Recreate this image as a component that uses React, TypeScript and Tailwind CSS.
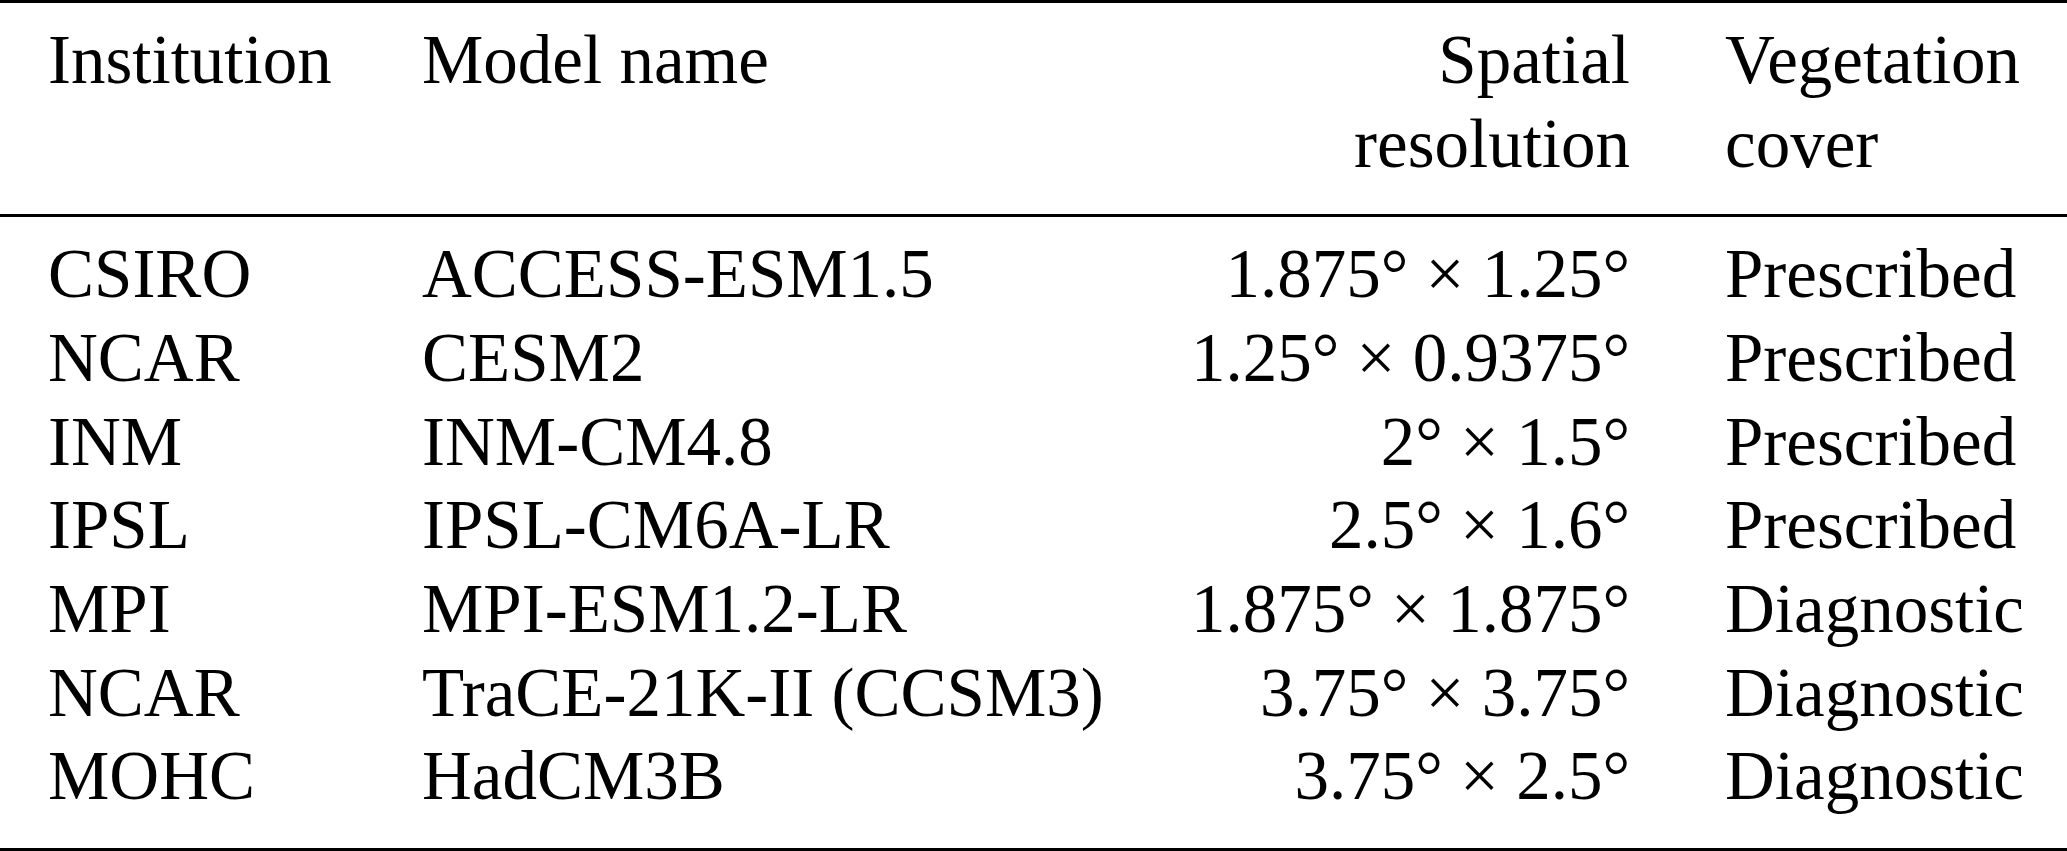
import React from 'react';

type Row = {
  institution: string;
  model: string;
  resolution: string;
  vegetation: string;
};

const rows: Row[] = [
  { institution: 'CSIRO', model: 'ACCESS-ESM1.5', resolution: '1.875° × 1.25°', vegetation: 'Prescribed' },
  { institution: 'NCAR', model: 'CESM2', resolution: '1.25° × 0.9375°', vegetation: 'Prescribed' },
  { institution: 'INM', model: 'INM-CM4.8', resolution: '2° × 1.5°', vegetation: 'Prescribed' },
  { institution: 'IPSL', model: 'IPSL-CM6A-LR', resolution: '2.5° × 1.6°', vegetation: 'Prescribed' },
  { institution: 'MPI', model: 'MPI-ESM1.2-LR', resolution: '1.875° × 1.875°', vegetation: 'Diagnostic' },
  { institution: 'NCAR', model: 'TraCE-21K-II (CCSM3)', resolution: '3.75° × 3.75°', vegetation: 'Diagnostic' },
  { institution: 'MOHC', model: 'HadCM3B', resolution: '3.75° × 2.5°', vegetation: 'Diagnostic' },
];

const grid = 'grid grid-cols-[374px_600px_608px_1fr] px-[48px]';

export default function App() {
  return (
    <div className="w-[2067px] h-[851px] bg-white text-black font-['Liberation_Serif','Times_New_Roman',serif] text-[69px] leading-[83.67px]">
      <div className="h-[3px] bg-black" />
      <div className={`${grid} pt-[16px] pb-[28px]`}>
        <div>Institution</div>
        <div>Model name</div>
        <div className="text-right">
          Spatial
          <br />
          resolution
        </div>
        <div className="pl-[95px]">
          Vegetation
          <br />
          cover
        </div>
      </div>
      <div className="h-[3px] bg-black" />
      <div className={`${grid} pt-[16px] pb-[29px]`}>
        {rows.map((r, i) => (
          <React.Fragment key={i}>
            <div className="whitespace-nowrap">{r.institution}</div>
            <div className="whitespace-nowrap">{r.model}</div>
            <div className="whitespace-nowrap text-right">{r.resolution}</div>
            <div className="whitespace-nowrap pl-[95px]">{r.vegetation}</div>
          </React.Fragment>
        ))}
      </div>
      <div className="h-[3px] bg-black" />
    </div>
  );
}
